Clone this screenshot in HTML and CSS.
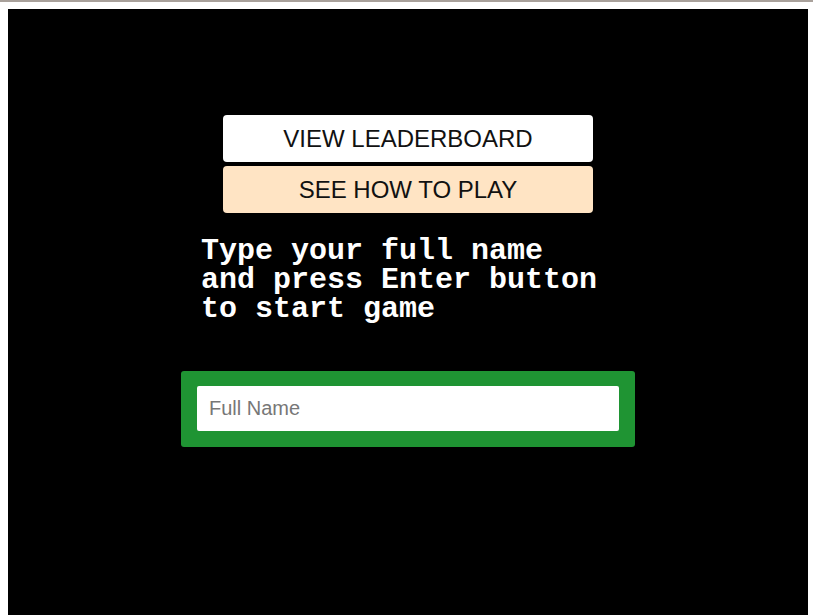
FILE: index.html
```html
<!DOCTYPE html>
<html>
<head>
<meta charset="utf-8">
<link rel="stylesheet" href="styles.css">
</head>
<body>
<div class="topline"></div>
<main class="screen">
  <div class="menu">
    <button class="btn btn-white">VIEW LEADERBOARD</button>
    <button class="btn btn-bisque">SEE HOW TO PLAY</button>
  </div>
  <p class="prompt">Type your full name<br>and press Enter button<br>to start game</p>
  <div class="namebox">
    <input class="name-input" type="text" placeholder="Full Name">
  </div>
</main>
</body>
</html>
```
FILE: styles.css
```css
html, body {
  margin: 0;
  padding: 0;
  background: #ffffff;
  overflow: hidden;
}
.topline {
  height: 2px;
  background: #a9a19b;
}
.screen {
  margin: 7px 0 0 8px;
  width: 800px;
  height: 606px;
  background: #000000;
  display: flex;
  flex-direction: column;
  align-items: center;
  box-sizing: border-box;
  padding-top: 106px;
}
.menu {
  display: flex;
  flex-direction: column;
  gap: 4px;
}
.btn {
  width: 370px;
  height: 47px;
  border: none;
  border-radius: 4px;
  font-family: "Liberation Sans", Arial, sans-serif;
  font-size: 24px;
  color: #111111;
  padding: 0;
}
.btn-white { background: #ffffff; }
.btn-bisque { background: #ffe4c4; }
.prompt {
  width: 414px;
  margin: 24px 0 0 0;
  font-family: "Liberation Mono", "Courier New", monospace;
  font-weight: bold;
  font-size: 30px;
  line-height: 29px;
  color: #ffffff;
}
.namebox {
  margin-top: 47px;
  width: 454px;
  height: 76px;
  background: #1f9433;
  border-radius: 3px;
  box-sizing: border-box;
  padding: 15px 16px 16px;
}
.name-input {
  display: block;
  width: 100%;
  height: 45px;
  box-sizing: border-box;
  border: none;
  border-radius: 2px;
  padding: 0 12px;
  font-family: "Liberation Sans", Arial, sans-serif;
  font-size: 20px;
  background: #ffffff;
  outline: none;
}
.name-input::placeholder { color: #777777; }
```
